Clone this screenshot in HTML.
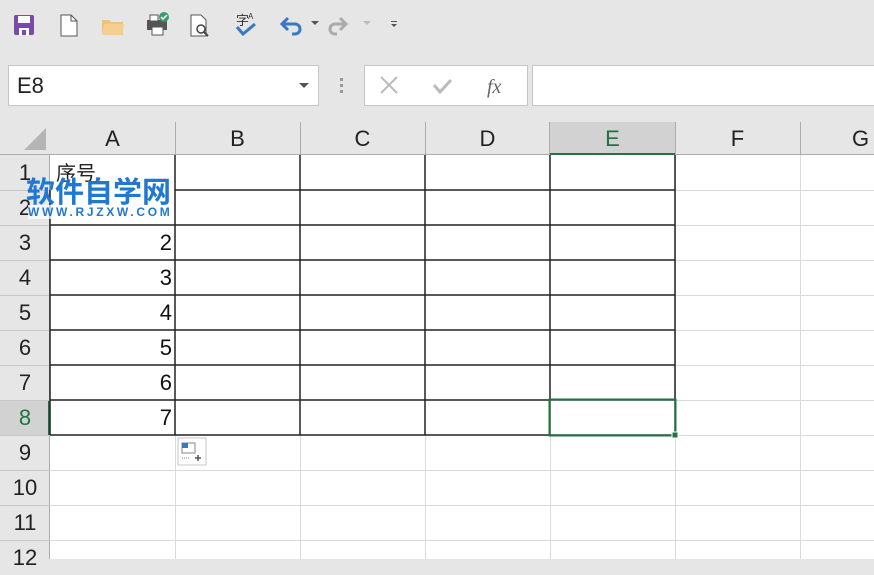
<!DOCTYPE html>
<html><head><meta charset="utf-8"><style>
*{margin:0;padding:0;box-sizing:border-box}
body{width:874px;height:559px;overflow:hidden;background:#e6e6e6;font-family:"Liberation Sans","Noto Sans CJK SC",sans-serif;position:relative}
.a{position:absolute}
.hl{position:absolute;height:1px;background:#dadada}
.vl{position:absolute;width:1px;background:#dadada}
.ch{position:absolute;top:122px;height:33px;font-size:22px;text-align:center;line-height:33px;color:#222}
.rh{position:absolute;left:0;width:50px;font-size:22px;text-align:center;color:#222;line-height:35px;height:35px}
.num{position:absolute;left:50px;width:122px;text-align:right;font-size:22px;line-height:35px;height:35px;color:#111}
</style></head><body>
<svg class="a" style="left:0;top:0" width="420" height="50">
<rect x="14" y="15" width="20" height="20" rx="2" fill="#7a4aa8"/><rect x="18" y="16" width="12" height="7" fill="#fff"/><rect x="19" y="28" width="10" height="7" fill="#fff"/><rect x="22" y="30" width="4" height="5" fill="#7a4aa8"/>
<path d="M61 15h10l6 6v15H61z" fill="#fff" stroke="#555"/><path d="M71 15v6h6" fill="none" stroke="#555"/>
<path d="M102 20h7l2 2h12v13h-21z" fill="#f0c27a"/><path d="M104 24h20l-2 11h-20z" fill="#f5cf8f"/>
<rect x="147" y="20" width="20" height="10" fill="#555"/><rect x="152" y="27" width="11" height="8" fill="#fff" stroke="#555"/><rect x="150" y="15" width="8" height="6" fill="#fff" stroke="#555"/><circle cx="164" cy="17" r="5" fill="#3b9a6e"/><path d="M161 17l2 2 4-4" stroke="#fff" fill="none" stroke-width="1.5"/>
<path d="M191 15h10l5 5v16h-15z" fill="#fff" stroke="#555"/><circle cx="201" cy="29" r="4" fill="none" stroke="#444" stroke-width="1.5"/><path d="M204 32l4 4" stroke="#444" stroke-width="2"/>
<text x="236" y="25" font-size="13" fill="#333" font-family="Noto Sans CJK SC">字</text><text x="248" y="19" font-size="8" fill="#333">A</text><path d="M237 27l6 7 12-10" stroke="#3b78c2" stroke-width="3" fill="none"/>
<path d="M288 18l-6 6 6 6" stroke="#3b78c2" stroke-width="3" fill="none"/><path d="M283 24h12a5 5 0 0 1 0 10h-3" stroke="#3b78c2" stroke-width="3" fill="none"/><path d="M311 21l4 4 4-4z" fill="#555"/>
<path d="M340 18l6 6-6 6" stroke="#aaa" stroke-width="3" fill="none"/><path d="M345 24h-10a5 5 0 0 0 0 10h2" stroke="#aaa" stroke-width="3" fill="none"/><path d="M363 21l4 4 4-4z" fill="#bbb"/>
<rect x="391" y="21" width="6" height="1" fill="#555"/><path d="M391 24l3 3 3-3z" fill="#555"/>
</svg>
<div class="a" style="left:8px;top:65px;width:311px;height:41px;background:#fff;border:1px solid #c6c6c6"></div>
<div class="a" style="left:17px;top:73px;font-size:22px;color:#222">E8</div>
<svg class="a" style="left:298px;top:82px" width="12" height="8"><path d="M1 1l5 5 5-5z" fill="#555"/></svg>
<div class="a" style="left:340px;top:78px;width:3px;height:16px;background:repeating-linear-gradient(#999 0 3px,transparent 3px 6px)"></div>
<div class="a" style="left:364px;top:65px;width:164px;height:41px;background:#fff;border:1px solid #c6c6c6"></div>
<svg class="a" style="left:364px;top:65px" width="164" height="41">
<path d="M17 12l16 16M33 12L17 28" stroke="#bbb" stroke-width="2"/>
<path d="M70 20l6 7 11-12" stroke="#bbb" stroke-width="3" fill="none"/>
<text x="123" y="28" font-size="20" font-style="italic" fill="#666" font-family="Liberation Serif">fx</text></svg>
<div class="a" style="left:532px;top:65px;width:350px;height:41px;background:#fff;border:1px solid #c6c6c6"></div>
<div class="a" style="left:0;top:122px;width:874px;height:437px;background:#fff"></div>
<div class="a" style="left:0;top:122px;width:874px;height:33px;background:#e6e6e6;border-bottom:1px solid #ababab"></div>
<div class="a" style="left:0;top:155px;width:50px;height:404px;background:#e6e6e6;border-right:1px solid #ababab"></div>
<div class="a" style="left:550px;top:122px;width:125px;height:33px;background:#d2d2d2;border-bottom:2px solid #217346"></div>
<div class="a" style="left:0;top:400px;width:50px;height:35px;background:#d2d2d2;border-right:2px solid #217346"></div>
<svg class="a" style="left:20px;top:126px" width="28" height="26"><path d="M26 2v22H4z" fill="#b5b5b5"/></svg>
<div class="ch" style="left:50px;width:125px">A</div><div class="ch" style="left:175px;width:125px">B</div><div class="ch" style="left:300px;width:125px">C</div><div class="ch" style="left:425px;width:125px">D</div><div class="ch" style="left:550px;width:125px;color:#217346">E</div><div class="ch" style="left:675px;width:125px">F</div><div class="ch" style="left:800px;width:125px;text-align:left;padding-left:52px">G</div>
<div class="vl" style="left:175px;top:122px;height:33px;background:#ababab"></div><div class="vl" style="left:300px;top:122px;height:33px;background:#ababab"></div><div class="vl" style="left:425px;top:122px;height:33px;background:#ababab"></div><div class="vl" style="left:549px;top:122px;height:33px;background:#ababab"></div><div class="vl" style="left:675px;top:122px;height:33px;background:#ababab"></div><div class="vl" style="left:800px;top:122px;height:33px;background:#ababab"></div>
<div class="vl" style="left:175px;top:435px;height:124px"></div><div class="vl" style="left:300px;top:435px;height:124px"></div><div class="vl" style="left:425px;top:435px;height:124px"></div><div class="vl" style="left:550px;top:435px;height:124px"></div><div class="vl" style="left:675px;top:155px;height:404px"></div><div class="vl" style="left:800px;top:155px;height:404px"></div>
<div class="hl" style="left:675px;top:190px;width:199px"></div><div class="hl" style="left:675px;top:225px;width:199px"></div><div class="hl" style="left:675px;top:260px;width:199px"></div><div class="hl" style="left:675px;top:295px;width:199px"></div><div class="hl" style="left:675px;top:330px;width:199px"></div><div class="hl" style="left:675px;top:365px;width:199px"></div><div class="hl" style="left:675px;top:400px;width:199px"></div>
<div class="hl" style="left:50px;top:470px;width:824px"></div><div class="hl" style="left:50px;top:505px;width:824px"></div><div class="hl" style="left:50px;top:540px;width:824px"></div><div class="hl" style="left:675px;top:435px;width:199px"></div>
<div class="hl" style="left:0;top:190px;width:50px;background:#c8c8c8"></div><div class="hl" style="left:0;top:225px;width:50px;background:#c8c8c8"></div><div class="hl" style="left:0;top:260px;width:50px;background:#c8c8c8"></div><div class="hl" style="left:0;top:295px;width:50px;background:#c8c8c8"></div><div class="hl" style="left:0;top:330px;width:50px;background:#c8c8c8"></div><div class="hl" style="left:0;top:365px;width:50px;background:#c8c8c8"></div><div class="hl" style="left:0;top:400px;width:50px;background:#c8c8c8"></div><div class="hl" style="left:0;top:435px;width:50px;background:#c8c8c8"></div><div class="hl" style="left:0;top:470px;width:50px;background:#c8c8c8"></div><div class="hl" style="left:0;top:505px;width:50px;background:#c8c8c8"></div><div class="hl" style="left:0;top:540px;width:50px;background:#c8c8c8"></div>
<svg class="a" style="left:0;top:0" width="874" height="559">
<g stroke="#222" stroke-width="1.5" fill="none">
<path d="M175 155V435M300 155V435M425 155V435M550 155V435M675 155V435"/>
<path d="M175 190H675M50 225H675M50 260H675M50 295H675M50 330H675M50 365H675M50 400H675M50 435H675"/>
<path d="M50 190V435"/>
</g>
<rect x="549.5" y="399.5" width="126" height="36" fill="none" stroke="#217346" stroke-width="2"/>
<rect x="672" y="432" width="6" height="6" fill="#217346" stroke="#fff"/>
<rect x="178" y="438" width="28" height="27" fill="#fff" stroke="#c6c6c6"/>
<rect x="182" y="443" width="13" height="10" fill="none" stroke="#888"/><rect x="182" y="443" width="6" height="5" fill="#3b78c2"/><path d="M182 458h8" stroke="#888" stroke-dasharray="1 1"/><path d="M198 455v6M195 458h6" stroke="#555" stroke-width="1.5"/>
</svg>
<div class="rh" style="top:155px">1</div><div class="rh" style="top:190px">2</div><div class="rh" style="top:225px">3</div><div class="rh" style="top:260px">4</div><div class="rh" style="top:295px">5</div><div class="rh" style="top:330px">6</div><div class="rh" style="top:365px">7</div><div class="rh" style="top:400px;color:#217346">8</div><div class="rh" style="top:435px">9</div><div class="rh" style="top:470px">10</div><div class="rh" style="top:505px">11</div><div class="rh" style="top:540px">12</div>
<div class="a" style="left:56px;top:157px;font-size:20px;color:#222">序号</div>
<div class="num" style="top:225px">2</div><div class="num" style="top:260px">3</div><div class="num" style="top:295px">4</div><div class="num" style="top:330px">5</div><div class="num" style="top:365px">6</div><div class="num" style="top:400px">7</div>
<div class="a" style="left:26px;top:173px;font-size:29px;font-weight:bold;color:#1f78d1;letter-spacing:0;font-family:'Noto Sans CJK SC',sans-serif;line-height:34px">软件自学网</div>
<div class="a" style="left:28px;top:205px;font-size:12px;font-weight:bold;color:#1f78d1;letter-spacing:2.7px;background:rgba(255,255,255,.7)">WWW.RJZXW.COM</div>
</body></html>
